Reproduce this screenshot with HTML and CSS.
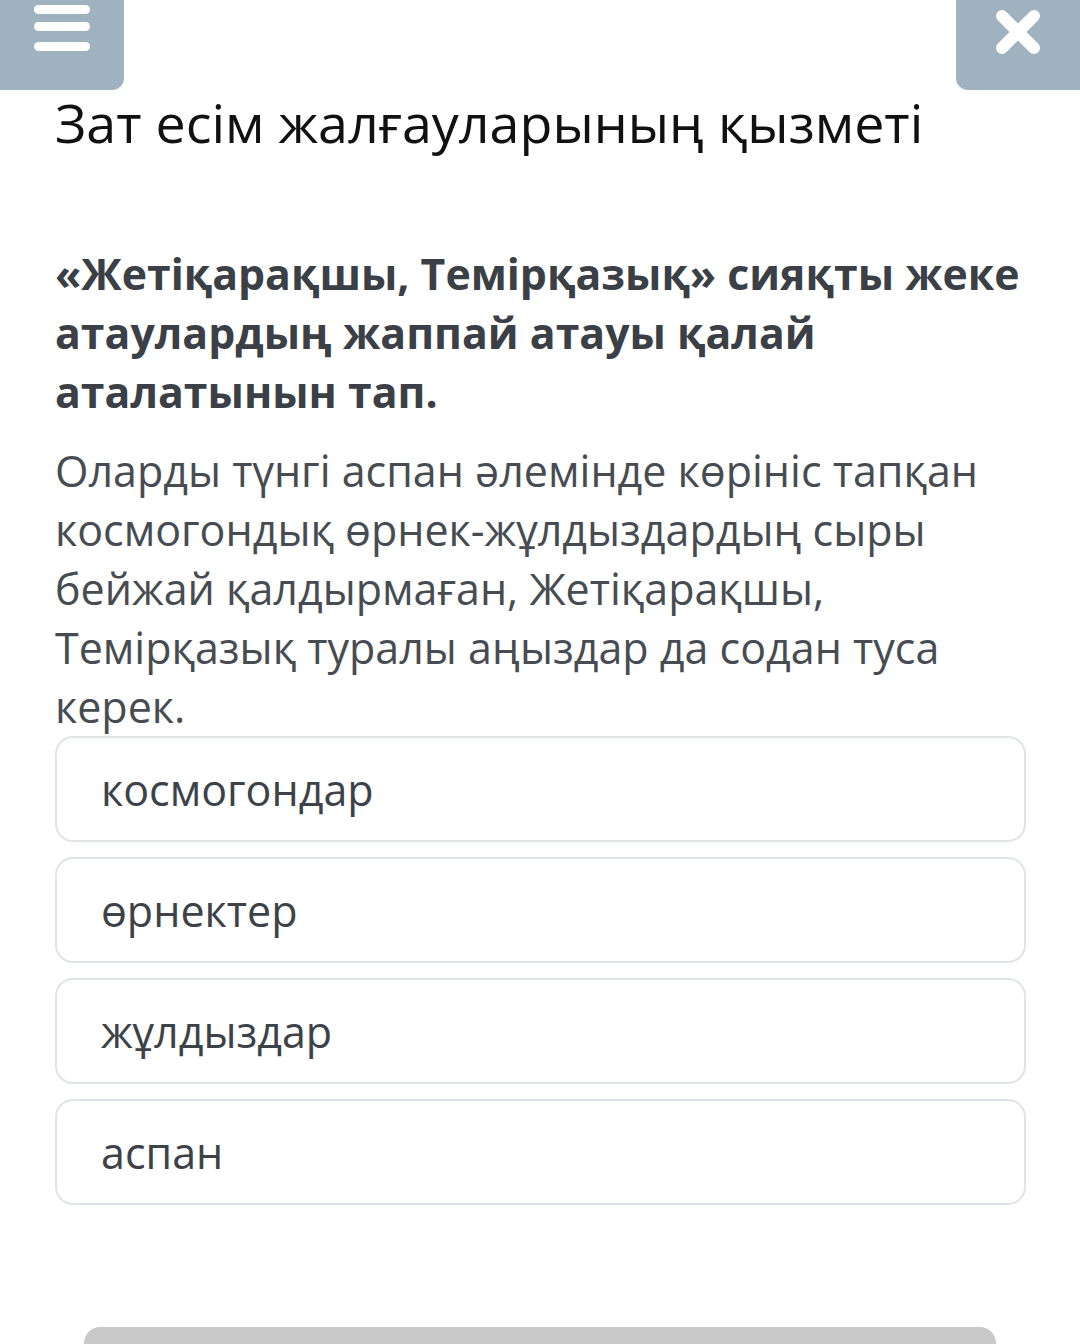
FILE: index.html
```html
<!DOCTYPE html>
<html lang="kk">
  <head>
    <meta charset="UTF-8" />
    <title>Зат есім жалғауларының қызметі</title>
    <link rel="stylesheet" href="styles.css">
  </head>
  <body>
    <div class="topbar">
      <button class="corner-btn corner-left" aria-label="Мәзір">
        <svg width="58" height="52" viewBox="0 0 58 52">
          <rect x="1" y="5" width="56" height="9" rx="4.5" fill="#fff" />
          <rect x="1" y="22" width="56" height="9" rx="4.5" fill="#fff" />
          <rect x="1" y="42" width="56" height="9" rx="4.5" fill="#fff" />
        </svg>
      </button>
      <button class="corner-btn corner-right" aria-label="Жабу">
        <svg width="48" height="48" viewBox="0 0 48 48">
          <path d="M8 8 L40 40 M40 8 L8 40" stroke="#fff" stroke-width="12" stroke-linecap="round" />
        </svg>
      </button>
    </div>

    <div class="content">
      <h1 class="title">Зат есім жалғауларының қызметі</h1>

      <p class="question">
        «Жетіқарақшы, Темірқазық» сияқты жеке атаулардың жаппай атауы қалай аталатынын тап.
      </p>

      <p class="passage">
        Оларды түнгі аспан әлемінде көрініс тапқан космогондық өрнек-жұлдыздардың сыры бейжай қалдырмаған, Жетіқарақшы, Темірқазық туралы аңыздар да содан туса керек.
      </p>

      <div class="options">
        <div class="option">космогондар</div>
        <div class="option">өрнектер</div>
        <div class="option">жұлдыздар</div>
        <div class="option">аспан</div>
      </div>
    </div>

    <div class="bottom-bar"></div>
  </body>
</html>
```

FILE: styles.css
```css
body {
  font-family: "Open Sans", "Noto Sans", sans-serif;
  background-color: #ffffff;
  margin: 0;
  padding: 0;
  height: 1344px;
  overflow: hidden;
}
.topbar {
  display: flex;
  justify-content: space-between;
  height: 90px;
}
.corner-btn {
  width: 124px;
  height: 90px;
  border: none;
  padding: 0;
  background-color: #9fb2bf;
  cursor: pointer;
}
.corner-left {
  border-bottom-right-radius: 12px;
  display: flex;
  justify-content: center;
  align-items: flex-start;
}
.corner-left svg {
  margin-left: -1px;
}
.corner-right {
  border-bottom-left-radius: 12px;
  display: flex;
  justify-content: center;
  align-items: flex-start;
  padding-top: 8px;
}
.content {
  padding: 0 55px;
}
.title {
  font-size: 53.8px;
  font-weight: 400;
  color: #111;
  margin: 0;
  line-height: 64px;
}
.question {
  font-size: 42.8px;
  font-weight: 700;
  color: #3b4047;
  line-height: 59px;
  margin: 90px 0 0 0;
}
.passage {
  font-size: 43px;
  color: #474c52;
  line-height: 59px;
  margin: 20px 0 0 0;
}
.options {
  display: flex;
  flex-direction: column;
  gap: 15px;
  margin-top: 0;
  margin-right: -1px;
}
.option {
  height: 102px;
  border: 2px solid #e1e4e6;
  border-radius: 18px;
  padding: 0 44px;
  font-size: 43px;
  color: #3d4248;
  display: flex;
  align-items: center;
}
.bottom-bar {
  margin: 122px auto 0;
  width: 912px;
  height: 40px;
  background-color: #c9c9c9;
  border-radius: 16px 16px 0 0;
}
```
